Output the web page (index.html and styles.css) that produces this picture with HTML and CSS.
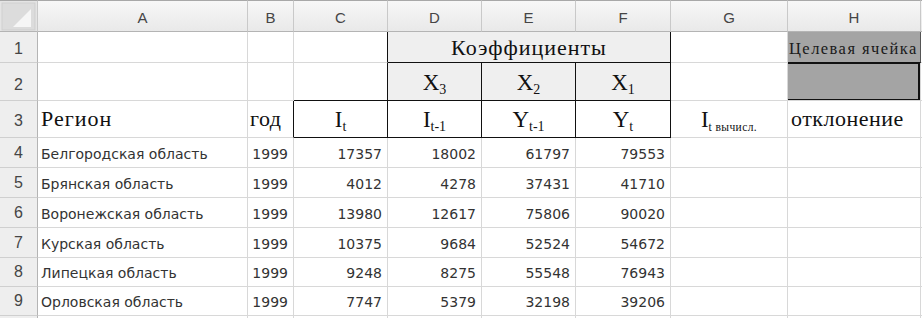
FILE: index.html
```html
<!DOCTYPE html>
<html lang="ru">
<head>
<meta charset="utf-8">
<link rel="stylesheet" href="styles.css">
</head>
<body>
<div class="sheet">
  <div class="ch corner"><svg width="37" height="31" viewBox="0 0 37 31"><rect x="2" y="2" width="33" height="27" fill="#dcdcdc" stroke="#cfcfcf"/><polygon points="31,8 31,26 13,26" fill="#f6f6f6"/></svg></div>
  <div class="ch">A</div><div class="ch">B</div><div class="ch">C</div><div class="ch">D</div><div class="ch">E</div><div class="ch">F</div><div class="ch">G</div><div class="ch">H</div><div class="ch edge"></div>

  <div class="rh">1</div><div class="c"></div><div class="c"></div><div class="c br"></div>
  <div class="c koef">Коэффициенты</div>
  <div class="c"></div><div class="c target">Целевая ячейка</div><div class="c edge"></div>

  <div class="rh r2">2</div><div class="c"></div><div class="c"></div><div class="c br bb"></div>
  <div class="c fill br bb cen"><span class="sym">X<sub>3</sub></span></div>
  <div class="c fill br bb cen"><span class="sym">X<sub>2</sub></span></div>
  <div class="c fill br bb cen"><span class="sym">X<sub>1</sub></span></div>
  <div class="c"></div><div class="c active"></div><div class="c edge"></div>

  <div class="rh r3">3</div>
  <div class="c serif">Регион</div>
  <div class="c serif br god">год</div>
  <div class="c br bb cen"><span class="sym">I<sub>t</sub></span></div>
  <div class="c br bb cen"><span class="sym">I<sub>t-1</sub></span></div>
  <div class="c br bb cen"><span class="sym">Y<sub>t-1</sub></span></div>
  <div class="c br bb cen"><span class="sym">Y<sub>t</sub></span></div>
  <div class="c cen"><span class="sym">I<sub class="small">t вычисл.</sub></span></div>
  <div class="c serif otkl">отклонение</div><div class="c edge"></div>

  <div class="rh d">4</div><div class="c t">Белгородская область</div><div class="c n">1999</div><div class="c n">17357</div><div class="c n">18002</div><div class="c n">61797</div><div class="c n">79553</div><div class="c"></div><div class="c"></div><div class="c edge"></div>
  <div class="rh d">5</div><div class="c t">Брянская область</div><div class="c n">1999</div><div class="c n">4012</div><div class="c n">4278</div><div class="c n">37431</div><div class="c n">41710</div><div class="c"></div><div class="c"></div><div class="c edge"></div>
  <div class="rh d">6</div><div class="c t">Воронежская область</div><div class="c n">1999</div><div class="c n">13980</div><div class="c n">12617</div><div class="c n">75806</div><div class="c n">90020</div><div class="c"></div><div class="c"></div><div class="c edge"></div>
  <div class="rh d">7</div><div class="c t">Курская область</div><div class="c n">1999</div><div class="c n">10375</div><div class="c n">9684</div><div class="c n">52524</div><div class="c n">54672</div><div class="c"></div><div class="c"></div><div class="c edge"></div>
  <div class="rh d">8</div><div class="c t">Липецкая область</div><div class="c n">1999</div><div class="c n">9248</div><div class="c n">8275</div><div class="c n">55548</div><div class="c n">76943</div><div class="c"></div><div class="c"></div><div class="c edge"></div>
  <div class="rh d">9</div><div class="c t">Орловская область</div><div class="c n">1999</div><div class="c n">7747</div><div class="c n">5379</div><div class="c n">32198</div><div class="c n">39206</div><div class="c"></div><div class="c"></div><div class="c edge"></div>
  <div class="rh d"></div><div class="c"></div><div class="c"></div><div class="c"></div><div class="c"></div><div class="c"></div><div class="c"></div><div class="c"></div><div class="c"></div><div class="c edge"></div>
</div>
</body>
</html>
```
FILE: styles.css
```css
html, body {
  margin: 0;
  padding: 0;
  background: #ffffff;
  overflow: hidden;
}
.sheet {
  display: grid;
  grid-template-columns: 38px 210px 46px 94px 94px 94px 95px 117px 133px 20px;
  grid-template-rows: 32px 31px 38px 37px 30px 30px 30px 30px 29px 29px 30px;
  width: 922px;
  height: 318px;
  overflow: hidden;
}
.sheet > div {
  box-sizing: border-box;
  min-width: 0;
  overflow: hidden;
  white-space: nowrap;
}
.ch {
  background: linear-gradient(#f7f7f7, #e9e9e9);
  border-top: 1px solid #a8a8a8;
  border-right: 1px solid #c9c9c9;
  border-bottom: 1px solid #b4b4b4;
  font-family: "Liberation Sans", Arial, sans-serif;
  font-size: 15px;
  color: #454545;
  display: flex;
  align-items: center;
  justify-content: center;
  padding-top: 3px;
}
.corner {
  padding: 0;
  align-items: flex-start;
  justify-content: flex-start;
  background: #e4e4e4;
}
.corner svg { display: block; }
.rh {
  background: #eeeeee;
  border-right: 1px solid #b4b4b4;
  border-bottom: 1px solid #cfcfcf;
  font-family: "Liberation Sans", Arial, sans-serif;
  font-size: 16px;
  color: #454545;
  display: flex;
  align-items: flex-end;
  justify-content: center;
  padding-bottom: 4px;
}
.rh.r2 { padding-bottom: 6px; }
.rh.r3 { padding-bottom: 7px; }
.rh.d { padding-bottom: 5px; }
.c {
  border-right: 1px solid #d8d8d8;
  border-bottom: 1px solid #d8d8d8;
  display: flex;
  align-items: flex-end;
  color: #111;
}
.c.br { border-right-color: #111; }
.c.bb { border-bottom-color: #111; }
.koef {
  grid-column: span 3;
  background: #efefef;
  border-right-color: #111;
  border-bottom-color: #111;
  justify-content: center;
  font-family: "Liberation Serif", "Times New Roman", serif;
  font-size: 22px;
  letter-spacing: 1px;
  line-height: 24px;
  padding-bottom: 2px;
}
.fill { background: #efefef; }
.target {
  background: #a4a4a4;
  border-bottom-color: #111;
  border-right-color: #555;
  font-family: "Liberation Serif", "Times New Roman", serif;
  font-size: 16.5px;
  letter-spacing: 1.45px;
  padding: 0 0 3px 1px;
  color: #1a1a1a;
}
.active {
  background: #a4a4a4;
  position: relative;
}
.active::after {
  content: "";
  position: absolute;
  left: -2px;
  top: -1px;
  right: 0;
  bottom: -1px;
  border: 2px solid #111;
}
.cen { justify-content: center; }
.sym {
  font-family: "Liberation Serif", "Times New Roman", serif;
  font-size: 23px;
  line-height: 26px;
  padding-bottom: 4px;
}
.sym sub {
  font-size: 14px;
  vertical-align: -4px;
  line-height: 0;
}
.sym sub.small { font-size: 11.5px; letter-spacing: 0.4px; }
.serif {
  font-family: "Liberation Serif", "Times New Roman", serif;
  font-size: 22px;
  letter-spacing: 1px;
  line-height: 24px;
  padding: 0 0 6px 3px;
}
.serif.otkl { letter-spacing: 0.5px; }
.god { padding-left: 2px; letter-spacing: 0.5px; }
.t, .n {
  font-family: "DejaVu Sans", Verdana, sans-serif;
  font-size: 14px;
  line-height: 17px;
  color: #333;
  padding-bottom: 4px;
}
.t { padding-left: 3px; }
.n { justify-content: flex-end; padding-right: 5px; }
.edge { border-right: none; }
```
